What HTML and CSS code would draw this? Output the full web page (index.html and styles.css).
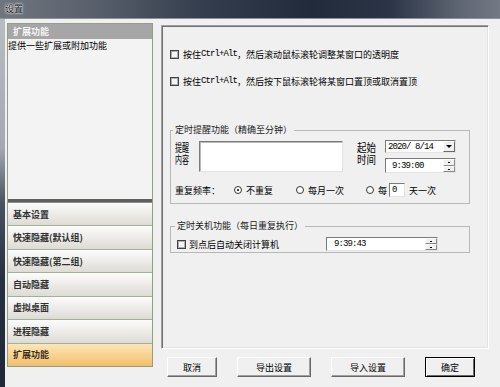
FILE: index.html
```html
<!DOCTYPE html>
<html lang="zh-CN">
	<head>
		<meta charset="UTF-8">
		<title>设置</title>
		<link rel="stylesheet" href="styles.css">
	</head>
	<body>
		<div id="win">
			<div id="titlebar"><span class="title">设置</span></div>
			<div id="client">
				<div class="frame-left"></div>
				<div id="side">
					<div class="side-head">扩展功能</div>
					<div class="side-desc">提供一些扩展或附加功能</div>
					<div class="side-split"></div>
					<ul class="side-list">
						<li>基本设置</li>
						<li>快速隐藏(默认组)</li>
						<li>快速隐藏(第二组)</li>
						<li>自动隐藏</li>
						<li>虚拟桌面</li>
						<li>进程隐藏</li>
						<li class="on">扩展功能</li>
					</ul>
				</div>
				<div id="main">
					<div id="panel">
						<div class="chk chk-1"><span class="box"></span>按住<span class="mono">Ctrl+Alt</span>，然后滚动鼠标滚轮调整某窗口的透明度</div>
						<div class="chk chk-2"><span class="box"></span>按住<span class="mono">Ctrl+Alt</span>，然后按下鼠标滚轮将某窗口置顶或取消置顶</div>

						<fieldset class="grp grp-remind">
							<legend>定时提醒功能（精确至分钟）</legend>
							<div class="remind-row">
								<span class="tall tall-a">提醒<br>内容</span>
								<div class="memo"></div>
								<span class="tall tall-b">起始<br>时间</span>
								<div class="pickers">
									<div class="field date"><span class="mono">2020/ 8/14</span><span class="drop"></span></div>
									<div class="field time"><span class="mono">9:39:00</span><span class="spin"><i class="up"></i><i class="down"></i></span></div>
								</div>
							</div>
							<div class="repeat-row">
								<span>重复频率：</span>
								<span class="radio radio-1 checked"></span><span class="rtxt">不重复</span>
								<span class="radio radio-2"></span><span class="rtxt">每月一次</span>
								<span class="radio radio-3"></span><span class="rtxt">每</span>
								<span class="days"><span class="mono">0</span></span>
								<span class="rtxt-after">天一次</span>
							</div>
						</fieldset>

						<fieldset class="grp grp-shut">
							<legend>定时关机功能（每日重复执行）</legend>
							<div class="shut-row">
								<span class="box"></span><span class="shut-txt">到点后自动关闭计算机</span>
								<div class="field time time-2"><span class="mono">9:39:43</span><span class="spin"><i class="up"></i><i class="down"></i></span></div>
							</div>
						</fieldset>
					</div>
					<div id="btns">
						<button class="btn btn-s">取消</button>
						<button class="btn btn-l">导出设置</button>
						<button class="btn btn-l">导入设置</button>
						<button class="btn btn-s btn-def">确定</button>
					</div>
				</div>
			</div>
		</div>
	</body>
</html>
```

FILE: styles.css
```css
* {
	margin: 0;
	padding: 0;
	list-style: none;
	box-sizing: border-box;
}

body {
	background-color: #f0f0f0;
}

#win {
	width: 500px;
	height: 387px;
	overflow: hidden;
	background-color: #f0f0f0;
	font-family: "Noto Sans CJK SC", "Liberation Sans", sans-serif;
	font-size: 9px;
	color: #000;
}

/* 标题栏 */
#titlebar {
	height: 19px;
	background: linear-gradient(to right, #70767f 0%, #5a616d 18%, #353e4e 40%, #212b3b 62%, #2b3547 78%, #5f6673 92%, #737985 100%);
	border-bottom: 1px solid #8d939c;
}

#titlebar .title {
	display: block;
	padding-left: 5px;
	line-height: 18px;
	font-size: 9px;
	color: #151515;
	text-shadow: 0 0 3px #e8ecf0, 0 0 2px #e8ecf0, 0 0 1px #fff;
}

#client {
	display: flex;
	height: 368px;
}

.frame-left {
	width: 5px;
	background: linear-gradient(#b8bcc3 0%, #a4a9b1 35%, #4a5363 50%, #283142 70%, #1f2838 100%);
}

/* 左侧导航 */
#side {
	display: flex;
	flex-direction: column;
	width: 146px;
	height: 344px;
	margin: 4px 0 0 2px;
	border: 1px solid #90a085;
	background-color: #f3f3f3;
}

.side-head {
	height: 15px;
	line-height: 15px;
	padding-left: 5px;
	background-color: #a6a6a6;
	color: #f6f6f6;
	font-weight: 700;
}

.side-desc {
	height: 160px;
	line-height: 13px;
}

.side-split {
	height: 4px;
	background-color: #5f5f5f;
	border-bottom: 1px solid #8a8a8a;
}

.side-list {
	display: flex;
	flex-direction: column;
	flex: 1;
}

.side-list li {
	flex: 1;
	display: flex;
	align-items: center;
	padding-left: 5px;
	border-top: 1px solid #a3b199;
	background: linear-gradient(#fcfcfb, #dedbd5);
	font-weight: 700;
	color: #303030;
}

.side-list li:first-child {
	border-top: none;
}

.side-list li.on {
	background: linear-gradient(#fbe6b8, #f2bf6c);
	color: #3c3020;
}

/* 右侧 */
#main {
	width: 328px;
	margin: 6px 0 0 8px;
}

#panel {
	height: 324px;
	padding: 0 0 0 8px;
	border: 1px solid;
	border-color: #a0a0a0 #ffffff #ffffff #a0a0a0;
	box-shadow: inset 1px 1px 0 #707070, inset -1px -1px 0 #e3e3e3;
}

.mono {
	font-family: "Liberation Mono", "DejaVu Sans Mono", monospace;
	font-size: 9px;
	letter-spacing: -0.9px;
}

.chk {
	display: flex;
	align-items: center;
	height: 12px;
	white-space: nowrap;
}

.chk-1 {
	margin-top: 22px;
}

.chk-2 {
	margin-top: 15px;
}

.box {
	display: inline-block;
	flex: none;
	width: 9px;
	height: 9px;
	margin-right: 4px;
	border: 1px solid #404040;
	background-color: #f6f6f6;
	box-shadow: inset 0 0 0 1px #b0b0b0;
}

.grp {
	width: 300px;
	border: 1px solid #b7b7b7;
	padding: 4px 0 0 4px;
}

.grp legend {
	padding: 0 2px;
	margin-left: -2px;
	line-height: 12px;
	color: #1a1a1a;
}

.grp-remind {
	margin-top: 37px;
	padding-bottom: 6px;
}

.remind-row {
	display: flex;
	align-items: flex-start;
	height: 33px;
}

.tall {
	display: inline-block;
	flex: none;
	margin-top: 1px;
	font-size: 11px;
	line-height: 12px;
	white-space: nowrap;
	transform-origin: left top;
}

.tall-a {
	width: 14px;
	transform: scaleX(0.64);
}

.tall-b {
	width: 19px;
	margin-left: 14px;
	transform: scaleX(0.86);
}

.memo {
	width: 144px;
	height: 31px;
	margin: 1px 0 0 10px;
	background-color: #fff;
	border: 1px solid;
	border-color: #7a7a7a #e3e3e3 #e3e3e3 #7a7a7a;
	box-shadow: inset 1px 1px 0 #b9b9b9;
}

.pickers {
	width: 71px;
	margin-left: 9px;
}

.field {
	display: flex;
	align-items: center;
	justify-content: space-between;
	background-color: #fff;
	border: 1px solid;
	border-color: #7a7a7a #e3e3e3 #e3e3e3 #7a7a7a;
}

.date {
	height: 13px;
	padding-left: 2px;
}

.drop {
	position: relative;
	width: 12px;
	height: 11px;
	background-color: #f0f0f0;
	border: 1px solid;
	border-color: #fff #696969 #696969 #fff;
}

.drop::after {
	content: "";
	position: absolute;
	left: 2px;
	top: 3px;
	border-left: 3px solid transparent;
	border-right: 3px solid transparent;
	border-top: 3px solid #000;
}

.time {
	height: 15px;
	margin-top: 5px;
	padding-left: 6px;
}

.spin {
	display: flex;
	flex-direction: column;
	width: 12px;
	height: 13px;
}

.spin i {
	position: relative;
	flex: 1;
	background-color: #f0f0f0;
	border: 1px solid;
	border-color: #fff #8a8a8a #8a8a8a #fff;
}

.spin i::after {
	content: "";
	position: absolute;
	left: 4px;
	top: 2px;
	width: 2px;
	height: 1px;
	background-color: #000;
}

.repeat-row {
	display: flex;
	align-items: center;
	height: 14px;
	margin-top: 10px;
	white-space: nowrap;
}

.radio {
	position: relative;
	flex: none;
	width: 8px;
	height: 8px;
	margin-right: 4px;
	border: 1px solid #333;
	border-radius: 50%;
	background-color: #fff;
}

.radio.checked::after {
	content: "";
	position: absolute;
	left: 2px;
	top: 2px;
	width: 2px;
	height: 2px;
	border-radius: 50%;
	background-color: #000;
}

.radio-1 {
	margin-left: 14px;
}

.radio-2 {
	margin-left: 23px;
}

.radio-3 {
	margin-left: 22px;
}

.days {
	display: flex;
	align-items: center;
	width: 16px;
	height: 14px;
	margin-left: 2px;
	padding-left: 2px;
	background-color: #fff;
	border: 1px solid;
	border-color: #7a7a7a #e3e3e3 #e3e3e3 #7a7a7a;
}

.rtxt-after {
	margin-left: 4px;
}

.grp-shut {
	margin-top: 16px;
	padding: 5px 0 1px 6px;
}

.shut-row {
	display: flex;
	align-items: center;
	height: 14px;
	white-space: nowrap;
}

.shut-row .box {
	margin-right: 3px;
}

.time-2 {
	width: 112px;
	height: 14px;
	margin: 0 0 0 47px;
	padding-left: 7px;
}

.time-2 .spin {
	height: 12px;
}

/* 底部按钮 */
#btns {
	display: flex;
	gap: 20px;
	margin-top: 8px;
	padding-left: 6px;
}

.btn {
	height: 20px;
	background-color: #f0f0f0;
	border: 1px solid;
	border-color: #fff #696969 #696969 #fff;
	box-shadow: inset -1px -1px 0 #a0a0a0;
	font-family: "Noto Sans CJK SC", "Liberation Sans", sans-serif;
	font-size: 9px;
	color: #000;
}

.btn-s {
	width: 50px;
}

.btn-l {
	width: 74px;
}

.btn-def {
	border: 1px solid #000;
	box-shadow: inset 1px 1px 0 #fff, inset -1px -1px 0 #696969;
}
```
